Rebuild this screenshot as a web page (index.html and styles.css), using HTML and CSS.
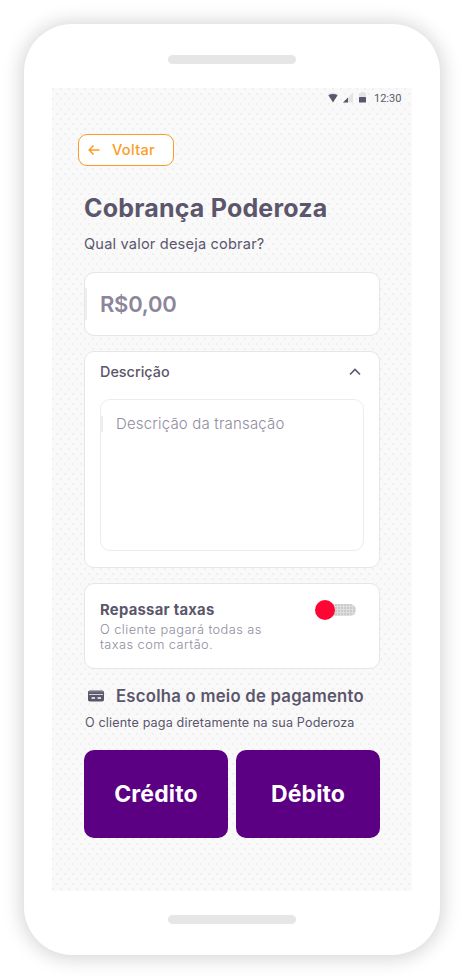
FILE: index.html
```html
<!DOCTYPE html>
<html lang="pt-BR">
<head>
<meta charset="utf-8">
<title>Cobrança Poderoza</title>
<link rel="stylesheet" href="styles.css">
</head>
<body>
<div class="phone">
  <div class="speaker"></div>
  <main class="screen">
    <div class="status">
      <svg width="40" height="12" viewBox="0 0 40 12">
        <path d="M0 2Q5 -1 10 2L9 4H1Z" fill="#e4e4e4"/>
        <path d="M.4 3.2Q5 .8 9.6 3.2L5 10.5Z" fill="#5b566c"/>
        <path d="M15 10.5L25 .5V10.5Z" fill="#e4e4e4"/>
        <path d="M15 10.5L20 5.5V10.5Z" fill="#5b566c"/>
        <path d="M31 1H33V0H36V1H38V5H31Z" fill="#e4e4e4"/>
        <rect x="31" y="5" width="7" height="5.5" rx=".6" fill="#5b566c"/>
      </svg>
      <span class="time">12:30</span>
    </div>
    <button class="back">
      <svg width="12" height="12" viewBox="0 0 12 12" fill="none" stroke="#f99d26" stroke-width="1.5"><path d="M11.5 6H1.5M5.5 1.6L1.2 6L5.5 10.4"/></svg>
      <span class="back-label">Voltar</span>
    </button>
    <h1 class="title">Cobrança Poderoza</h1>
    <p class="question">Qual valor deseja cobrar?</p>
    <div class="card amount"><span class="amount-value">R$0,00</span></div>
    <section class="card details">
      <div class="details-head">
        <span class="details-label">Descrição</span>
        <svg width="12" height="8" viewBox="0 0 12 8" fill="none" stroke="#5b566c" stroke-width="1.6"><path d="M1 6.5L6 1.5L11 6.5"/></svg>
      </div>
      <div class="note"><span class="note-hint">Descrição da transação</span></div>
    </section>
    <section class="card fees">
      <div>
        <h2 class="fees-title">Repassar taxas</h2>
        <p class="fees-text">O cliente pagará todas as<br>taxas com cartão.</p>
      </div>
      <div class="toggle"><span class="knob"></span><span class="track"></span></div>
    </section>
    <div class="method">
      <svg width="16" height="12" viewBox="0 0 16 12">
        <rect y=".5" width="16" height="11" rx="1.8" fill="#5b566c"/>
        <path d="M1.5 1.8H14.5" stroke="#c9c7cf" stroke-width=".8" stroke-dasharray="1 1"/>
        <path d="M1 4.5H15" stroke="#d5d3d9" stroke-width="1"/>
        <path d="M3.5 8H7M9.5 8H13" stroke="#fff" stroke-width="1.3"/>
      </svg>
      <h2 class="method-title">Escolha o meio de pagamento</h2>
    </div>
    <p class="method-text">O cliente paga diretamente na sua Poderoza</p>
    <div class="actions">
      <button class="pay">Crédito</button>
      <button class="pay">Débito</button>
    </div>
  </main>
  <div class="speaker"></div>
</div>
</body>
</html>
```

FILE: styles.css
```css
* { box-sizing: border-box; }
body { margin: 0; padding: 24px; background: #fff; overflow: hidden; font-family: Inter, "Liberation Sans", sans-serif; color: #5b566c; }
h1, h2, p { margin: 0; }
span, h1, h2, p { white-space: nowrap; }
svg { display: block; flex: none; }
button { font: inherit; margin: 0; padding: 0; }
.phone { width: 416px; height: 931px; border-radius: 48px; background: #fff; box-shadow: 0 1px 20px 2px rgba(0,0,0,.18); display: flex; flex-direction: column; align-items: center; padding: 31px 0; justify-content: space-between; }
.speaker { width: 128px; height: 9px; border-radius: 5px; background: #e6e6e6; }
.screen { width: 360px; height: 803px; padding: 0 32px; background-color: #f9f9f9; background-image: radial-gradient(circle at 1px 1px, #e6e6e6 .5px, transparent .9px), radial-gradient(circle at 1px 1px, #e6e6e6 .5px, transparent .9px); background-size: 8px 10px; background-position: 0 0, 4px 5px; display: flex; flex-direction: column; }
.status { height: 20px; display: flex; align-items: center; justify-content: flex-end; margin-right: -22px; }
.time { font: 11px/20px Roboto, sans-serif; width: 28px; margin-left: 6px; padding-top: 1px; }
.back { margin: 26px 0 0 -6px; width: 96px; height: 32px; border: 1.3px solid #f99d26; border-radius: 9px; background: #fff; display: flex; align-items: center; padding-left: 9px; gap: 12px; color: #f99d26; }
.back-label { font-size: 14.6px; line-height: 18px; font-weight: 500; letter-spacing: .3px; }
.title { margin-top: 24px; font-size: 25px; line-height: 36px; font-weight: 700; letter-spacing: .2px; }
.question { margin-top: 8px; font-size: 14.6px; line-height: 20px; letter-spacing: .18px; }
.card { border: 1px solid #e6e6e6; border-radius: 10px; background: #fff; }
.amount { margin-top: 18px; height: 64px; display: flex; align-items: center; }
.amount::before { content: ""; width: 2px; height: 32px; margin-right: 13px; background: #eee; }
.amount-value { font-size: 22px; font-weight: 600; color: #8b869b; letter-spacing: -.25px; }
.details { margin-top: 15px; height: 217px; padding: 0 15px 0; }
.details-head { height: 40px; display: flex; align-items: center; justify-content: space-between; padding-right: 3px; }
.details-label { font-size: 14.4px; font-weight: 500; padding-bottom: 2px; }
.note { margin-top: 7px; height: 152px; border: 1px solid #ececec; border-radius: 10px; display: flex; align-items: flex-start; padding-top: 14px; }
.note::before { content: ""; width: 2px; height: 16px; margin: 2px 13px 0 0; background: #eee; }
.note-hint { font-size: 15px; line-height: 20px; color: #918da0; font-weight: 300; letter-spacing: .18px; }
.fees { margin-top: 15px; height: 86px; padding: 16px 23px 0 15px; display: flex; justify-content: space-between; }
.fees-title { font-size: 14.8px; line-height: 20px; font-weight: 700; letter-spacing: .28px; }
.fees-text { font-size: 12.8px; line-height: 15px; margin-top: 2px; color: #918da0; font-weight: 300; letter-spacing: .44px; }
.toggle { height: 20px; display: flex; align-items: center; }
.knob { width: 20px; height: 20px; border-radius: 50%; background: #ff0533; z-index: 1; }
.track { width: 27px; height: 12px; margin-left: -6px; border-radius: 0 6px 6px 0; background: #dedede radial-gradient(circle at 1px 1px, #b5b5b5 .5px, transparent .9px) 0 0 / 3px 3px; }
.method { margin-top: 15px; height: 24px; display: flex; align-items: center; gap: 12px; padding-left: 4px; }
.method-title { font-size: 16.7px; line-height: 24px; font-weight: 600; letter-spacing: .25px; }
.method-text { margin-top: 6px; margin-left: 1px; font-size: 12.6px; line-height: 18px; letter-spacing: .15px; }
.actions { margin-top: 18px; display: grid; grid-template-columns: 144px 144px; gap: 8px; }
.pay { height: 88px; border: 0; border-radius: 10px; background: #5b0082; color: #fff; font-size: 23px; font-weight: 700; letter-spacing: .15px; }
```
